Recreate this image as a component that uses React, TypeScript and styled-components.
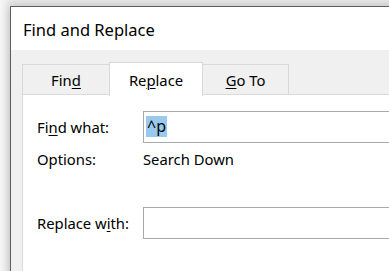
import React from "react";
import styled, { createGlobalStyle } from "styled-components";

const GlobalStyle = createGlobalStyle`
  html, body {
    margin: 0;
    padding: 0;
    background: #f4f4f4;
    overflow: hidden;
  }
  body {
    font-family: "Noto Sans", "Open Sans", sans-serif;
    color: #000;
  }
`;

const Desktop = styled.div`
  width: 389px;
  height: 271px;
  padding: 6px 0 0 10px;
  box-sizing: border-box;
  overflow: hidden;
  background: linear-gradient(to right, #f7f7f7 0px, #e9e9e9 10px);
`;

const Dialog = styled.div`
  width: 520px;
  height: 320px;
  background: #f0f0f0;
  border-left: 1px solid #5e5e5e;
  border-top: 1px solid #5e5e5e;
  box-shadow: 0 0 9px rgba(0, 0, 0, 0.22);
  display: flex;
  flex-direction: column;
`;

const TitleBar = styled.div`
  height: 43px;
  background: #fff;
  display: flex;
  align-items: center;
  padding: 2px 0 0 12px;
  font-size: 16.5px;
  box-sizing: border-box;
`;

const Body = styled.div`
  padding: 12px 0 0 11px;
  flex: 1;
  display: flex;
  flex-direction: column;
`;

const TabStrip = styled.div`
  display: flex;
  align-items: flex-end;
  height: 33px;
  position: relative;
  z-index: 1;
`;

const Tab = styled.div<{ $active?: boolean; $w: number }>`
  width: ${(p) => p.$w}px;
  height: ${(p) => (p.$active ? 34 : 31)}px;
  box-sizing: border-box;
  border: 1px solid #d9d9d9;
  border-bottom: ${(p) => (p.$active ? "none" : "1px solid #d9d9d9")};
  margin-left: -1px;
  background: ${(p) => (p.$active ? "#fff" : "#f0f0f0")};
  display: flex;
  align-items: center;
  justify-content: center;
  font-size: 14.8px;
  padding-top: 1px;
  margin-bottom: ${(p) => (p.$active ? -1 : 0)}px;
  &:first-child {
    margin-left: 0;
  }
`;

const Key = styled.span`
  text-decoration: underline;
  text-underline-offset: 2px;
  text-decoration-thickness: 1px;
`;

const Panel = styled.div`
  flex: 1;
  background: #fff;
  border: 1px solid #d9d9d9;
  margin-top: -1px;
  padding: 16px 0 0 14px;
  display: flex;
  flex-direction: column;
  font-size: 14.8px;
`;

const Row = styled.div<{ $gap?: number; $h: number }>`
  display: flex;
  align-items: center;
  height: ${(p) => p.$h}px;
  margin-top: ${(p) => p.$gap ?? 0}px;
  white-space: nowrap;
`;

const Label = styled.div`
  width: 106px;
  flex-shrink: 0;
`;

const Field = styled.div`
  width: 300px;
  height: 32px;
  box-sizing: border-box;
  border: 1px solid #a9a9a9;
  background: #fff;
  display: flex;
  align-items: center;
  padding: 0 0 1px 2px;
  flex-shrink: 0;
`;

const Selected = styled.span`
  background: #99c9ef;
  line-height: 21px;
  padding: 0 1px;
  font-size: 16px;
`;

export default function App() {
  return (
    <>
      <GlobalStyle />
      <Desktop>
        <Dialog>
          <TitleBar>Find and Replace</TitleBar>
          <Body>
            <TabStrip>
              <Tab $w={88}>
                Fin<Key>d</Key>
              </Tab>
              <Tab $w={94} $active>
                Re<Key>p</Key>lace
              </Tab>
              <Tab $w={87}>
                <Key>G</Key>o To
              </Tab>
            </TabStrip>
            <Panel>
              <Row $h={32}>
                <Label>
                  Fi<Key>n</Key>d what:
                </Label>
                <Field>
                  <Selected>^p</Selected>
                </Field>
              </Row>
              <Row $h={22} $gap={5}>
                <Label>Options:</Label>
                <div>Search Down</div>
              </Row>
              <Row $h={32} $gap={37}>
                <Label>
                  Replace w<Key>i</Key>th:
                </Label>
                <Field />
              </Row>
            </Panel>
          </Body>
        </Dialog>
      </Desktop>
    </>
  );
}
